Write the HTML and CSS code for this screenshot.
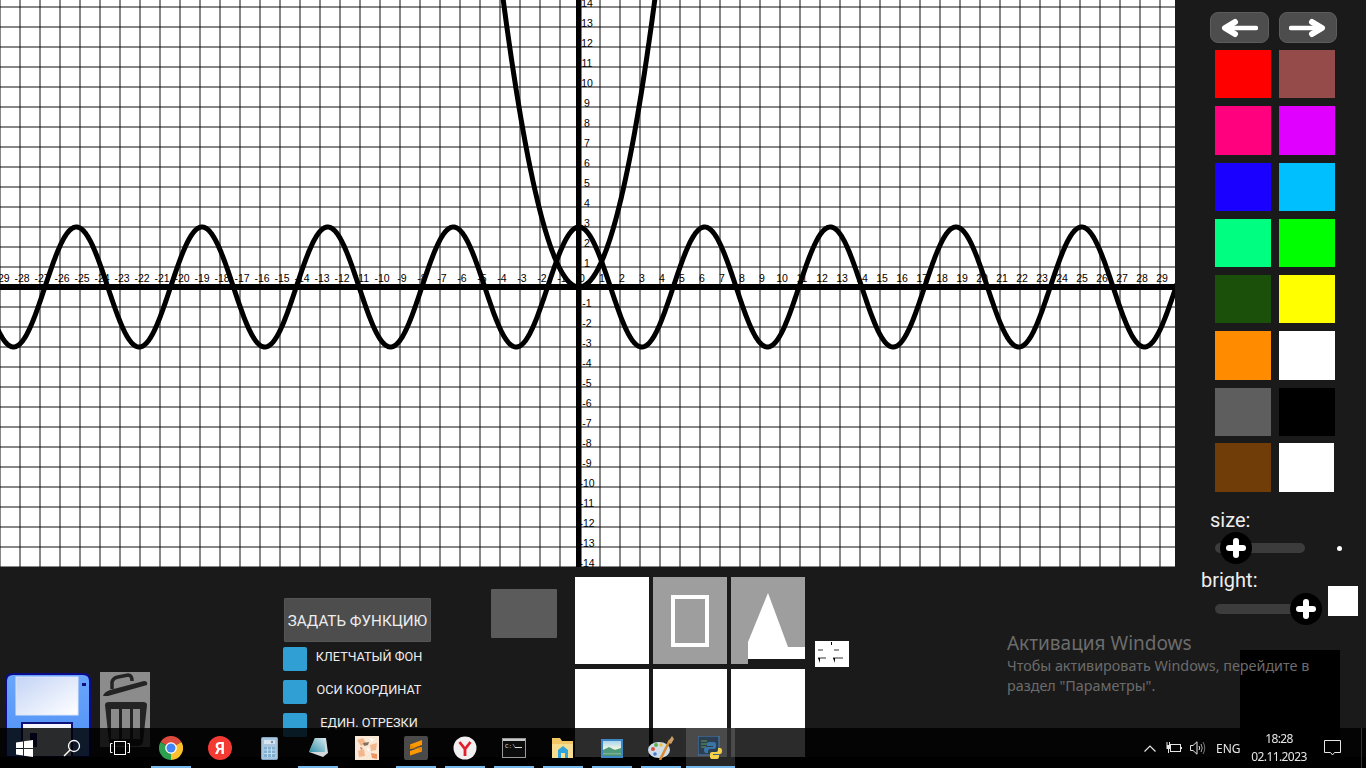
FILE: index.html
```html
<!DOCTYPE html>
<html lang="ru">
<head>
<meta charset="utf-8">
<title>Графики</title>
<link rel="stylesheet" href="styles.css">
</head>
<body>
<div class="app">
  <main class="workspace">
    <div class="canvas"><svg id="plot" class="plot" width="1175" height="567" viewBox="0 0 1175 567"></svg></div>
    <section class="tools">
      <svg class="floppy" width="86" height="84" viewBox="0 0 86 84">
        <defs>
          <linearGradient id="lab" x1="0" y1="0" x2="1" y2="1"><stop offset="0" stop-color="#c4d4f6"/><stop offset="1" stop-color="#ffffff"/></linearGradient>
          <linearGradient id="bod" x1="0" y1="0" x2="0" y2="1"><stop offset="0" stop-color="#6aa6fb"/><stop offset="1" stop-color="#4f8ff5"/></linearGradient>
        </defs>
        <path d="M8 1H78Q85 1 85 8V84H1V8Q1 1 8 1Z" fill="url(#bod)" stroke="#0b0b8c" stroke-width="2"/>
        <rect x="11" y="4" width="62" height="38" fill="url(#lab)" stroke="#dfe6f8"/>
        <rect x="77" y="10" width="4" height="3" fill="#10107a"/>
        <rect x="17" y="50" width="50" height="34" fill="#f4f6fc" stroke="#10107a" stroke-width="2"/>
        <rect x="25" y="60" width="7" height="14" fill="#10107a"/>
      </svg>
      <svg class="trash" width="50" height="75" viewBox="0 0 50 75">
        <rect width="50" height="75" fill="#8c8c8c"/>
        <path d="M3 24Q4 20 10 18L44 9Q48 9 47 13L8 24Z" fill="#242424"/>
        <path d="M12 17V10Q13 6 18 5L28 3Q32 3 32 9" fill="none" stroke="#242424" stroke-width="3.5"/>
        <path d="M5 33Q5 30 9 30H43Q47 30 47 33L43 70Q42 74 38 74H14Q10 74 9 70Z" fill="#242424"/>
        <rect x="11" y="37" width="8" height="30" fill="#8c8c8c"/>
        <rect x="22" y="37" width="8" height="30" fill="#8c8c8c"/>
        <rect x="33" y="37" width="7" height="30" fill="#8c8c8c"/>
      </svg>
      <div class="controls">
        <button class="func-btn">ЗАДАТЬ ФУНКЦИЮ</button>
        <div class="check-row"><span class="check"></span><span class="check-label">КЛЕТЧАТЫЙ ФОН</span></div>
        <div class="check-row"><span class="check"></span><span class="check-label">ОСИ КООРДИНАТ</span></div>
        <div class="check-row"><span class="check"></span><span class="check-label">ЕДИН. ОТРЕЗКИ</span></div>
      </div>
      <div class="gray-box"></div>
      <div class="tiles">
        <div class="tile"></div>
        <div class="tile tile-gray"><span class="rect-outline"></span></div>
        <div class="tile tile-shape">
          <svg width="74" height="87" viewBox="0 0 74 87">
            <rect width="17" height="87" fill="#9e9e9e"/>
            <rect width="74" height="70" fill="#9e9e9e"/>
            <path d="M37 16L57 70H74V82H17V65Z" fill="#fff"/>
          </svg>
        </div>
        <div class="tile tile-low"></div>
        <div class="tile tile-low"></div>
        <div class="tile tile-low"></div>
      </div>
      <svg class="mini" width="34" height="26" viewBox="0 0 34 26">
        <rect width="34" height="26" fill="#fff"/>
        <path d="M3 9H8M19 9H24M3 17H11M18 17H28" stroke="#333" stroke-width="1"/>
        <path d="M3 17H5V22ZM18 17H20V22ZM16 1H17V4H16Z" fill="#000"/>
      </svg>
    </section>
  </main>
  <aside class="sidebar">
    <div class="arrows">
      <button class="arrow-btn">
        <svg width="38" height="20" viewBox="0 0 38 20"><path d="M36 10H8" stroke="#fff" stroke-width="4.500" stroke-linecap="round"/><path d="M15 4L5 10L15 16" fill="none" stroke="#fff" stroke-width="6" stroke-linecap="round" stroke-linejoin="round"/></svg>
      </button>
      <button class="arrow-btn">
        <svg width="38" height="20" viewBox="0 0 38 20"><path d="M2 10H30" stroke="#fff" stroke-width="4.500" stroke-linecap="round"/><path d="M23 4L33 10L23 16" fill="none" stroke="#fff" stroke-width="6" stroke-linecap="round" stroke-linejoin="round"/></svg>
      </button>
    </div>
    <div class="palette">
      <span class="sw c-red"></span><span class="sw c-brown"></span>
      <span class="sw c-pink"></span><span class="sw c-violet"></span>
      <span class="sw c-blue"></span><span class="sw c-sky"></span>
      <span class="sw c-mint"></span><span class="sw c-green"></span>
      <span class="sw c-forest"></span><span class="sw c-yellow"></span>
      <span class="sw c-orange"></span><span class="sw c-white"></span>
      <span class="sw c-gray"></span><span class="sw c-black"></span>
      <span class="sw c-umber"></span><span class="sw c-white c-last"></span>
    </div>
    <div class="size-label">size:</div>
    <div class="size-row">
      <div class="track"><span class="thumb thumb-size"></span></div>
      <span class="dot"></span>
    </div>
    <div class="bright">
      <div class="bright-col">
        <div class="bright-label">bright:</div>
        <div class="track"><span class="thumb thumb-bright"></span></div>
      </div>
      <span class="bright-swatch"></span>
    </div>
  </aside>
  <div class="black-box"></div>
</div>

<div class="watermark">
  <div class="wm-title">Активация Windows</div>
  <div class="wm-text">Чтобы активировать Windows, перейдите в<br>раздел "Параметры".</div>
</div>

<footer class="taskbar">
  <div class="tb-sys">
    <svg width="17" height="17" viewBox="0 0 17 17"><path d="M0 2.500L7 1.500V8H0ZM8 1.300L17 0V8H8ZM0 9H7V15.500L0 14.500ZM8 9H17V17L8 15.700Z" fill="#fff"/></svg>
  </div>
  <div class="tb-sys">
    <svg width="18" height="18" viewBox="0 0 18 18"><circle cx="11" cy="7" r="5.500" fill="none" stroke="#fff" stroke-width="1.300"/><path d="M7 11L1 17" stroke="#fff" stroke-width="1.500"/></svg>
  </div>
  <div class="tb-sys">
    <svg width="20" height="14" viewBox="0 0 20 14"><rect x="4.500" y="0.500" width="11" height="13" fill="none" stroke="#fff"/><path d="M2.500 2.500H0.500V11.500H2.500M17.500 2.500H19.500V11.500H17.500" fill="none" stroke="#fff"/></svg>
  </div>
  <div class="tb-apps">
    <div class="tb-app on">
      <svg width="24" height="24" viewBox="0 0 24 24"><path d="M1.600 6A12 12 0 0 1 22.400 6L12 12Z" fill="#dd4b3e"/><path d="M22.400 6A12 12 0 0 1 12 24L12 12Z" fill="#fbc02d"/><path d="M12 24A12 12 0 0 1 1.600 6L12 12Z" fill="#2e9e4f"/><circle cx="12" cy="12" r="5.800" fill="#fff"/><circle cx="12" cy="12" r="4.500" fill="#4285f4"/></svg>
    </div>
    <div class="tb-app">
      <svg width="24" height="24" viewBox="0 0 24 24"><circle cx="12" cy="12" r="12" fill="#f33a33"/><text x="12" y="18" class="ya" text-anchor="middle">Я</text></svg>
    </div>
    <div class="tb-app">
      <svg width="17" height="23" viewBox="0 0 17 23"><rect x="0.500" y="0.500" width="16" height="22" rx="1" fill="#a9c6dc" stroke="#7fa6c6"/><rect x="3" y="3" width="11" height="4" fill="#d6e6f2"/><circle cx="11" cy="5" r="1.200" fill="#6f8fa8"/><path d="M3 10H14V20H3Z" fill="#7fb0d2"/><path d="M6.500 10V20M10.500 10V20M3 13H14M3 16.500H14" stroke="#c7dcea"/></svg>
    </div>
    <div class="tb-app on">
      <svg width="22" height="22" viewBox="0 0 22 22"><defs><linearGradient id="note" x1="0" y1="1" x2="1" y2="0"><stop offset="0" stop-color="#2f8fa6"/><stop offset="1" stop-color="#d7eaf0"/></linearGradient></defs><path d="M8 1H19L21 16L16 20L2 15Z" fill="#d6d9dc"/><path d="M8 1H18L18 15L2 15Z" fill="url(#note)"/></svg>
    </div>
    <div class="tb-app">
      <svg width="24" height="24" viewBox="0 0 24 24"><rect width="24" height="24" fill="#f9e8d6"/><path d="M2 4L8 2L11 7L6 10ZM15 9L22 7L21 14L16 15ZM3 15L9 13L10 20L4 21Z" fill="#f3b78d"/><path d="M8 7L14 6L13 9L9 10Z" fill="#85705e"/><path d="M16 17L22 18L22 23L17 22Z" fill="#ea9563"/><path d="M12 12L15 13L13 16ZM14 2L19 3L17 6Z" fill="#fff"/><path d="M5 11L8 12L6 14Z" fill="#d8745a"/></svg>
    </div>
    <div class="tb-app on">
      <svg width="24" height="24" viewBox="0 0 24 24"><rect width="24" height="24" rx="2" fill="#4a4a4a"/><path d="M18 4L6 8.500V13L18 9ZM18 11L6 15V19.500L18 15.500Z" fill="#ff9800"/><path d="M6 8.500L18 15.500V11L6 13Z" fill="#e88a00"/></svg>
    </div>
    <div class="tb-app on">
      <svg width="24" height="24" viewBox="0 0 24 24"><circle cx="12" cy="12" r="11.500" fill="#f2f0f0"/><path d="M6.500 6L12 13L17.500 6M12 13V20" fill="none" stroke="#e1202a" stroke-width="2.800"/></svg>
    </div>
    <div class="tb-app on">
      <svg width="24" height="20" viewBox="0 0 24 20"><rect x="0.500" y="0.500" width="23" height="19" fill="#0c0c0c" stroke="#9a9a9a"/><rect x="1" y="1" width="22" height="2" fill="#c9c9c9"/><text x="3" y="9.500" class="cmd-text">C:\</text><path d="M13 9.500H20" stroke="#ddd"/></svg>
    </div>
    <div class="tb-app on">
      <svg width="22" height="22" viewBox="0 0 22 22"><path d="M0 1H8L10 4H21V21H0Z" fill="#f2c867"/><path d="M0 7H21V21H0Z" fill="#f7dd8f"/><path d="M6 13L11 9L16 13V21H13V16H9V21H6Z" fill="#2fa4dc"/></svg>
    </div>
    <div class="tb-app on">
      <svg width="22" height="19" viewBox="0 0 22 19">
        <defs><linearGradient id="sky" x1="0" y1="0" x2="0" y2="1"><stop offset="0" stop-color="#a9d5ef"/><stop offset="0.500" stop-color="#eef5e2"/><stop offset="1" stop-color="#3f8c6a"/></linearGradient></defs>
        <rect width="22" height="19" fill="#3f86c4"/><rect x="2" y="2" width="18" height="15" fill="url(#sky)"/><path d="M2 11L8 8L14 11L20 9V14H2Z" fill="#4f9a7a"/>
      </svg>
    </div>
    <div class="tb-app on">
      <svg width="26" height="24" viewBox="0 0 26 24"><ellipse cx="11" cy="14" rx="11" ry="8" fill="#cfdde8"/><circle cx="5" cy="13" r="2" fill="#d9503f"/><circle cx="8" cy="9" r="2" fill="#5db04f"/><circle cx="13" cy="9" r="1.800" fill="#e8c23a"/><circle cx="7" cy="18" r="1.800" fill="#3f7fd0"/><path d="M12 24L22 4" stroke="#d78b2e" stroke-width="2.500"/><path d="M20 6L24 0L26 3L23 8Z" fill="#c9a06a"/></svg>
    </div>
    <div class="tb-app on active">
      <svg width="24" height="24" viewBox="0 0 24 24"><rect x="0" y="0" width="21" height="19" fill="#2c3e50" stroke="#4a7fb5"/><path d="M3 5H9M3 8H11M3 11H8" stroke="#58a05c"/><path d="M15 6H11Q9 6 9 8V10H15V11H8Q6 11 6 14Q6 17 8 17H10V15Q10 13 12 13H16Q18 13 18 11V8Q18 6 15 6Z" fill="#3a75a8"/><path d="M15 23H19Q21 23 21 21V19H15V18H22Q24 18 24 15Q24 12 22 12H20V14Q20 16 18 16H14Q12 16 12 18V21Q12 23 15 23Z" fill="#f5d14a"/></svg>
    </div>
  </div>
  <div class="tray">
    <svg class="tr-chev" width="12" height="7" viewBox="0 0 12 7"><path d="M0.500 6.500L6 1L11.500 6.500" fill="none" stroke="#e6e6e6" stroke-width="1.200"/></svg>
    <svg class="tr-batt" width="16" height="12" viewBox="0 0 16 12"><rect x="4.500" y="2.500" width="10" height="7" fill="none" stroke="#e6e6e6"/><path d="M15.500 5V7" stroke="#e6e6e6"/><rect x="0.500" y="3" width="4" height="4" fill="#e6e6e6"/><path d="M1 0V3M3.500 0V3M2.500 7V11" stroke="#e6e6e6"/></svg>
    <svg class="tr-vol" width="16" height="14" viewBox="0 0 16 14"><path d="M0.500 4.500H3L7 0.800V13.200L3 9.500H0.500Z" fill="none" stroke="#e6e6e6"/><path d="M9 5Q10.500 7 9 9" fill="none" stroke="#e6e6e6"/><path d="M11 3Q13.500 7 11 11" fill="none" stroke="#aaa"/><path d="M13 1Q16.500 7 13 13" fill="none" stroke="#777"/></svg>
    <span class="tr-lang">ENG</span>
    <div class="tr-clock"><span>18:28</span><span>02.11.2023</span></div>
    <svg class="tr-note" width="17" height="16" viewBox="0 0 17 16"><path d="M0.500 0.500H16.500V12.500H10.500L8.500 15L6.500 12.500H0.500Z" fill="none" stroke="#e6e6e6"/></svg>
    <span class="tr-edge"></span>
  </div>
</footer>
<script src="script.js"></script>
</body>
</html>
```
FILE: styles.css
```css
* { box-sizing: border-box; }
html, body { margin: 0; padding: 0; width: 1366px; height: 768px; overflow: hidden; background: #000; font-family: Roboto, "Liberation Sans", sans-serif; }

.app { position: relative; display: flex; width: 1366px; height: 757px; background: #1a1a1a; }
.workspace { width: 1175px; display: flex; flex-direction: column; }

.canvas {
  width: 1175px; height: 567px; overflow: hidden; background-color: #fff;
  background-image:
    linear-gradient(to right, rgba(0,0,0,.47) 2px, transparent 2px),
    linear-gradient(to bottom, rgba(0,0,0,.47) 2px, transparent 2px);
  background-size: 20px 20px;
  background-position: 19px 6px;
}
.plot { display: block; }
.tick { font-family: "Liberation Sans", Arial, sans-serif; font-size: 10.500px; fill: #000; }
.curve { fill: none; stroke: #000; stroke-width: 5px; stroke-linejoin: round; }

.tools { display: flex; align-items: flex-start; height: 190px; background: #1a1a1a; }
.floppy { margin: 106px 0 0 5px; flex: none; display: block; }
.trash { margin: 105px 0 0 9px; flex: none; display: block; }

.controls { width: 147px; margin: 31px 0 0 134px; display: flex; flex-direction: column; flex: none; }
.func-btn { height: 44px; padding: 2px 0 0; border: 1px solid #555; border-radius: 1px; background: #4d4d4d; color: #eee; font: 15.200px Roboto, sans-serif; white-space: nowrap; }
.check-row { display: flex; align-items: center; height: 24px; margin-top: 9px; }
.func-btn + .check-row { margin-top: 5px; }
.check { width: 24px; height: 24px; flex: none; margin-left: -1px; border-radius: 2px; background: #2f9fd4; }
.check-label { flex: 1; padding-bottom: 6px; text-align: center; font-size: 12.700px; color: #eee; }

.gray-box { width: 66px; height: 49px; margin: 22px 0 0 60px; flex: none; border-radius: 1px; background: #5b5b5b; }

.tiles { display: grid; grid-template-columns: repeat(3, 74px); grid-template-rows: 87px 88px; column-gap: 4px; row-gap: 5px; margin: 10px 0 0 18px; flex: none; }
.tile { background: #fff; }
.tile-gray { background: #9e9e9e; display: flex; justify-content: center; align-items: center; }
.rect-outline { width: 38px; height: 52px; border: 4px solid #fff; }
.tile-shape { background: transparent; }
.tile-shape svg { display: block; }
.mini { margin: 74px 0 0 10px; flex: none; display: block; }

.sidebar { width: 191px; flex: none; padding-top: 12px; background: #1a1a1a; }
.arrows { display: flex; gap: 10px; margin-left: 35px; }
.arrow-btn { width: 58.500px; height: 31px; padding: 0; display: flex; align-items: center; justify-content: center; border: 1px solid #5d5d5d; border-radius: 8px; background: #4d4d4d; }
.palette { display: grid; grid-template-columns: 56px 56px; grid-auto-rows: 48.250px; column-gap: 8px; row-gap: 8px; margin: 7px 0 0 40px; }
.c-red { background: #ff0000; } .c-brown { background: #964b4b; }
.c-pink { background: #ff007f; } .c-violet { background: #e000ff; }
.c-blue { background: #1a00ff; } .c-sky { background: #00bfff; }
.c-mint { background: #00ff80; } .c-green { background: #00ff00; }
.c-forest { background: #1a500a; } .c-yellow { background: #ffff00; }
.c-orange { background: #ff8c00; } .c-white { background: #fff; }
.c-gray { background: #5e5e5e; } .c-black { background: #000; }
.c-umber { background: #703c08; margin-top: -1px; }
.c-last { width: 55px; margin-top: -1px; }

.size-label, .bright-label { font-size: 20px; line-height: 22px; color: #eee; }
.size-label { margin: 17px 0 0 35px; }
.size-row { display: flex; align-items: center; margin: 12px 0 0 40px; }
.track { position: relative; width: 90px; height: 10px; flex: none; border-radius: 5px; background: #3c3c3c; }
.thumb { position: absolute; top: 50%; width: 32px; height: 32px; margin-top: -16px; border-radius: 50%; background: #000; }
.thumb::before, .thumb::after { content: ""; position: absolute; background: #fff; border-radius: 3px; }
.thumb::before { left: 6px; top: 13px; width: 20px; height: 6px; }
.thumb::after { left: 13px; top: 6px; width: 6px; height: 20px; }
.thumb-size { left: 5px; }
.thumb-bright { left: 75px; }
.dot { width: 5px; height: 5px; margin-left: 32px; border-radius: 50%; background: #fff; }
.bright { display: flex; align-items: flex-start; margin: 16px 0 0 26px; }
.bright-col { width: 104px; }
.bright-col .track { margin: 13px 0 0 14px; }
.bright-swatch { width: 30px; height: 30px; margin: 17px 0 0 23px; background: #fff; }

.black-box { position: absolute; left: 1240px; top: 650px; width: 100px; height: 107px; background: #000; }

.watermark { position: absolute; left: 1007px; top: 631px; color: #6c6c6c; font-family: "Noto Sans", "Open Sans", sans-serif; }
.wm-title { font-size: 19px; line-height: 25px; }
.wm-text { font-size: 14.350px; line-height: 20px; }

.taskbar { position: fixed; left: 0; bottom: 0; width: 1366px; height: 40px; display: flex; background: rgba(0,0,0,.83); color: #e6e6e6; }
.tb-sys { width: 48px; flex: none; display: flex; align-items: center; justify-content: center; }
.tb-apps { display: flex; margin-left: 2.500px; }
.tb-app { position: relative; width: 49px; flex: none; display: flex; align-items: center; justify-content: center; }
.tb-app svg { display: block; }
.tb-app.on::after { content: ""; position: absolute; left: 4.500px; right: 4.500px; bottom: 0; height: 2px; background: #76b9ed; }
.tb-app.active { background: rgba(255,255,255,.15); }
.tb-app.active::after { left: 0; right: 0; }
.ya { font-family: Roboto, sans-serif; font-size: 16px; font-weight: 700; fill: #fff; }
.cmd-text { font-family: "Liberation Mono", monospace; font-size: 6px; fill: #ddd; }

.tray { margin-left: auto; display: flex; align-items: center; font-family: "Noto Sans", "Open Sans", sans-serif; font-size: 12px; }
.tr-chev { margin-right: 10px; }
.tr-batt { margin-right: 8px; }
.tr-vol { margin-right: 10px; }
.tr-lang { width: 23px; white-space: nowrap; }
.tr-clock { width: 80px; display: flex; flex-direction: column; align-items: center; line-height: 18px; letter-spacing: -.6px; margin-right: 5px; }
.tr-note { margin-right: 20px; }
.tr-edge { width: 1px; height: 40px; background: #333; margin-right: 4px; }
```
FILE: script.js
```js
// Plots the two functions and the axis numbers on the squared canvas.
(function () {
  var NS = 'http://www.w3.org/2000/svg';
  var svg = document.getElementById('plot');
  var OX = 579, OY = 287, UNIT = 20;

  function add(tag, attrs, text) {
    var el = document.createElementNS(NS, tag);
    for (var k in attrs) el.setAttribute(k, attrs[k]);
    if (text !== undefined) el.textContent = text;
    svg.appendChild(el);
    return el;
  }

  for (var i = -29; i <= 29; i++) {
    add('text', { x: OX + i * UNIT + 3, y: 282, 'class': 'tick', 'text-anchor': 'middle' }, String(i));
  }
  for (var j = -14; j <= 14; j++) {
    if (j === 0) continue;
    add('text', { x: OX + 8, y: OY - j * UNIT, 'class': 'tick', 'text-anchor': 'middle' }, String(j));
  }

  add('rect', { x: 576, y: 0, width: 5.5, height: 567 });
  add('rect', { x: 0, y: 284, width: 1175, height: 6 });

  function plot(fn, from, to) {
    var d = '';
    for (var px = from; px <= to; px += 1) {
      var v = fn((px - OX) / UNIT);
      d += (d ? 'L' : 'M') + px + ' ' + (OY - v * UNIT).toFixed(2);
    }
    add('path', { d: d, 'class': 'curve' });
  }
  plot(function (x) { return 3 * Math.cos(x); }, -2, 1177);
  plot(function (x) { return x * x; }, 495, 663);
})();
```
